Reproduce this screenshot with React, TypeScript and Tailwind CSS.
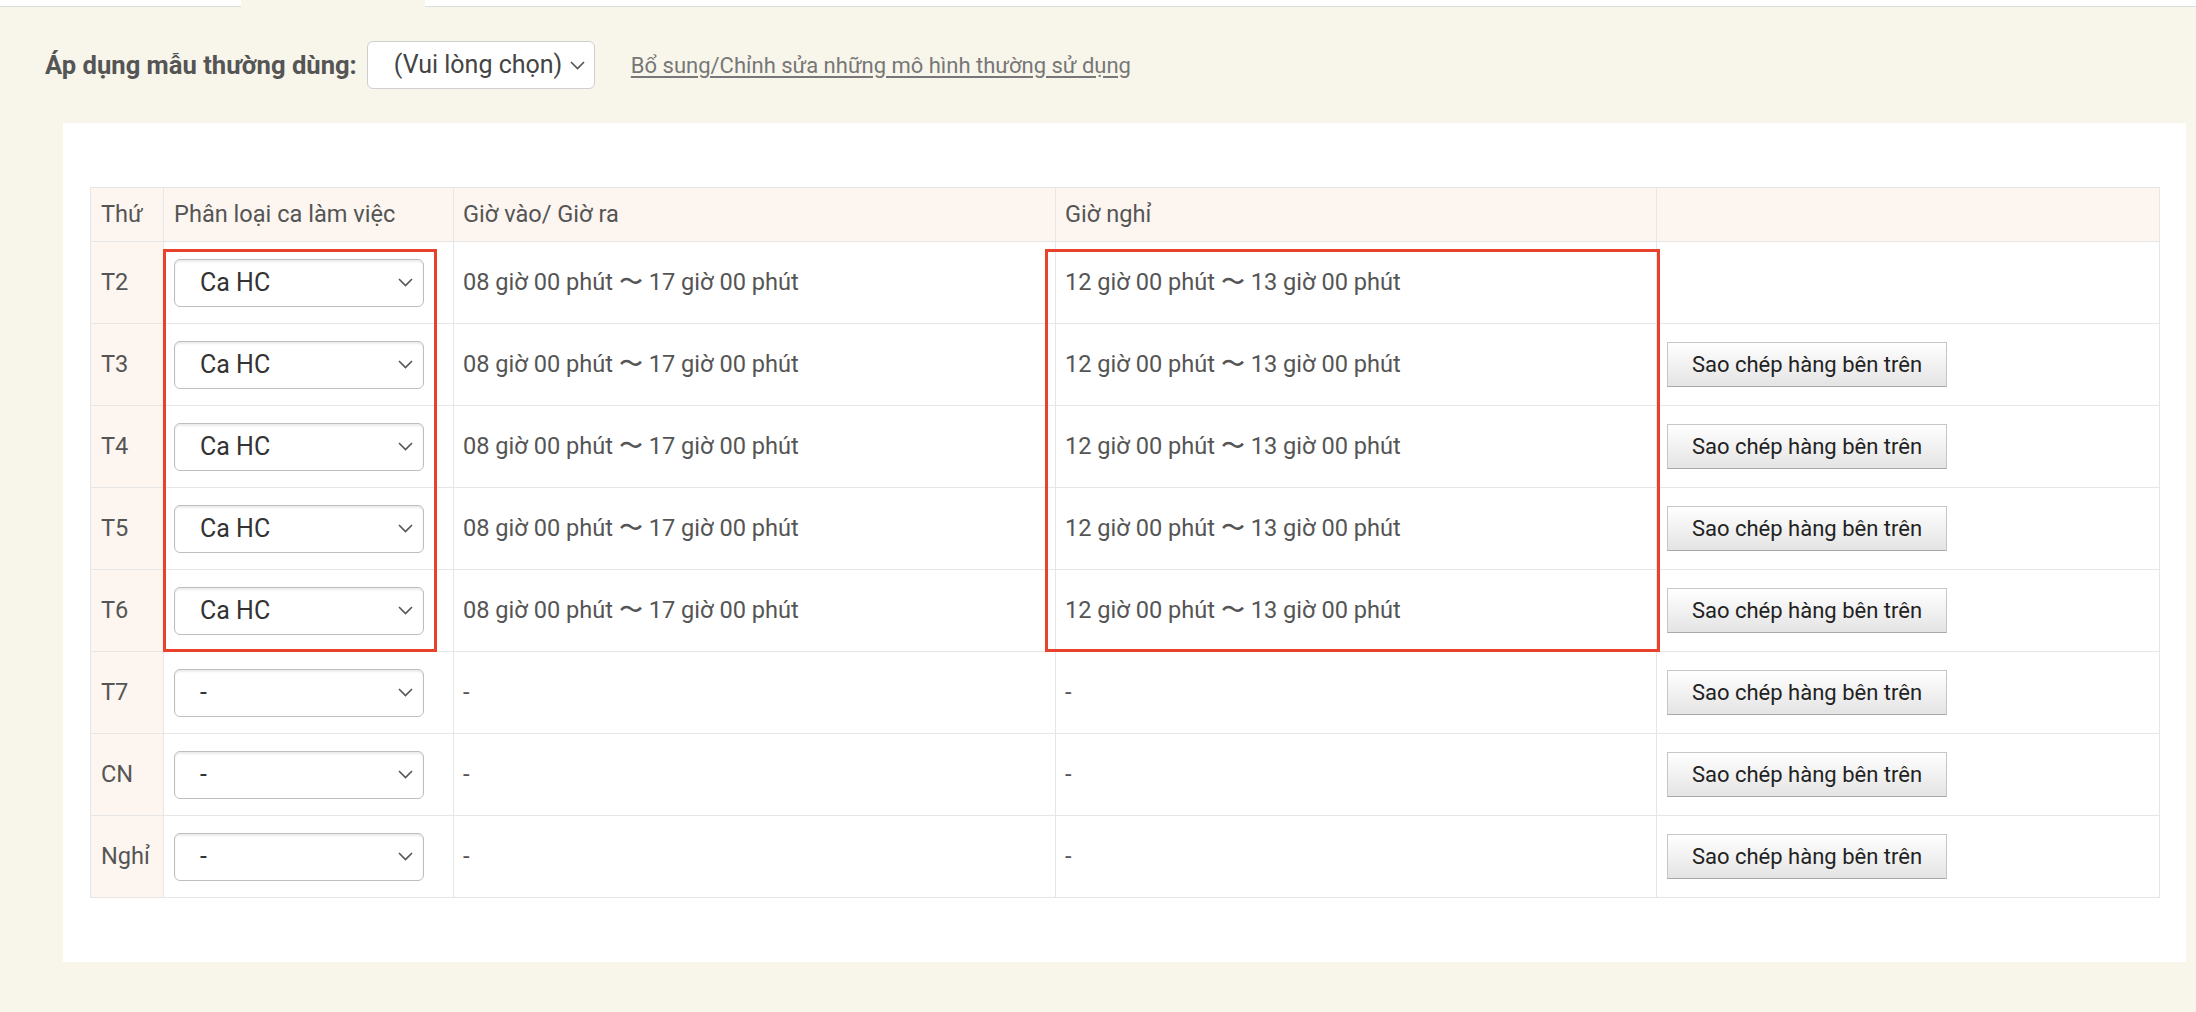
import React from "react";

const rows = [
  { d: "T2", v: "Ca HC", t: "08 giờ 00 phút 〜 17 giờ 00 phút", b: "12 giờ 00 phút 〜 13 giờ 00 phút", copy: false },
  { d: "T3", v: "Ca HC", t: "08 giờ 00 phút 〜 17 giờ 00 phút", b: "12 giờ 00 phút 〜 13 giờ 00 phút", copy: true },
  { d: "T4", v: "Ca HC", t: "08 giờ 00 phút 〜 17 giờ 00 phút", b: "12 giờ 00 phút 〜 13 giờ 00 phút", copy: true },
  { d: "T5", v: "Ca HC", t: "08 giờ 00 phút 〜 17 giờ 00 phút", b: "12 giờ 00 phút 〜 13 giờ 00 phút", copy: true },
  { d: "T6", v: "Ca HC", t: "08 giờ 00 phút 〜 17 giờ 00 phút", b: "12 giờ 00 phút 〜 13 giờ 00 phút", copy: true },
  { d: "T7", v: "-", t: "-", b: "-", copy: true },
  { d: "CN", v: "-", t: "-", b: "-", copy: true },
  { d: "Nghỉ", v: "-", t: "-", b: "-", copy: true },
];

function Chevron({ className = "" }: { className?: string }) {
  return (
    <svg className={className} width="15" height="9" viewBox="0 0 15 9" fill="none">
      <path d="M1 1l6.5 6.5L14 1" stroke="#555" strokeWidth="1.6" />
    </svg>
  );
}

function FakeSelect({ value }: { value: string }) {
  return (
    <div className="flex h-[48px] w-[250px] items-center justify-between rounded-[6px] border border-[#bdbdbd] bg-white pl-[25px] pr-[10px] shadow-[inset_0_2px_2px_rgba(0,0,0,0.08)]">
      <span className="text-[25px] text-[#333]">{value}</span>
      <Chevron />
    </div>
  );
}

export default function App() {
  return (
    <div className="min-h-[1012px] w-[2196px] bg-[#f8f6eb] font-['Roboto',sans-serif] text-[#555]">
      <div className="flex h-[7px]">
        <div className="w-[241px] border-b border-[#dcdcdc] bg-white" />
        <div className="w-[184px] bg-[#f8f6eb]" />
        <div className="flex-1 border-b border-[#dcdcdc] bg-white" />
      </div>
      <div className="flex h-[116px] items-start pl-[45px] pt-[34px]">
        <div className="flex items-center">
          <span className="text-[25.6px] font-bold text-[#555]">Áp dụng mẫu thường dùng:</span>
          <div className="ml-[10px] flex h-[48px] w-[228px] items-center justify-between rounded-[6px] border border-[#cfcfcf] bg-white pl-[26px] pr-[9px]">
            <span className="text-[25px] text-[#444]">(Vui lòng chọn)</span>
            <Chevron />
          </div>
          <a className="ml-[36px] text-[22px] text-[#777] underline underline-offset-[3px]">
            Bổ sung/Chỉnh sửa những mô hình thường sử dụng
          </a>
        </div>
      </div>
      <div className="ml-[63px] w-[2123px] bg-white px-[27px] pb-[64px] pt-[64px]">
        <div className="relative">
          <table className="w-[2069px] table-fixed border-collapse text-[23.6px] text-[#555]">
            <colgroup>
              <col className="w-[73px]" />
              <col className="w-[290px]" />
              <col className="w-[602px]" />
              <col className="w-[601px]" />
              <col className="w-[503px]" />
            </colgroup>
            <thead>
              <tr className="h-[54px] bg-[#fdf6f0]">
                <th className="border border-[#e6e6e6] pl-[10px] text-left font-normal">Thứ</th>
                <th className="border border-[#e6e6e6] pl-[10px] text-left font-normal">Phân loại ca làm việc</th>
                <th className="border border-[#e6e6e6] pl-[9px] text-left font-normal">Giờ vào/ Giờ ra</th>
                <th className="border border-[#e6e6e6] pl-[9px] text-left font-normal">Giờ nghỉ</th>
                <th className="border border-[#e6e6e6]" />
              </tr>
            </thead>
            <tbody>
              {rows.map((r) => (
                <tr key={r.d} className="h-[82px]">
                  <td className="border border-[#e6e6e6] bg-[#fdf6f0] pl-[10px]">{r.d}</td>
                  <td className="border border-[#e6e6e6] pl-[10px]">
                    <FakeSelect value={r.v} />
                  </td>
                  <td className="border border-[#e6e6e6] pl-[9px]">{r.t}</td>
                  <td className="border border-[#e6e6e6] pl-[9px]">{r.b}</td>
                  <td className="border border-[#e6e6e6] pl-[10px]">
                    {r.copy && (
                      <button className="h-[45px] w-[280px] border border-[#c6c6c6] border-b-[#a9a9a9] bg-gradient-to-b from-white to-[#e4e4e4] text-[22px] text-[#222]">
                        Sao chép hàng bên trên
                      </button>
                    )}
                  </td>
                </tr>
              ))}
            </tbody>
          </table>
          <div className="pointer-events-none absolute left-[73px] top-[62px] h-[403px] w-[274px] border-[3px] border-[#e8412c]" />
          <div className="pointer-events-none absolute left-[955px] top-[62px] h-[403px] w-[615px] border-[3px] border-[#e8412c]" />
        </div>
      </div>
    </div>
  );
}
